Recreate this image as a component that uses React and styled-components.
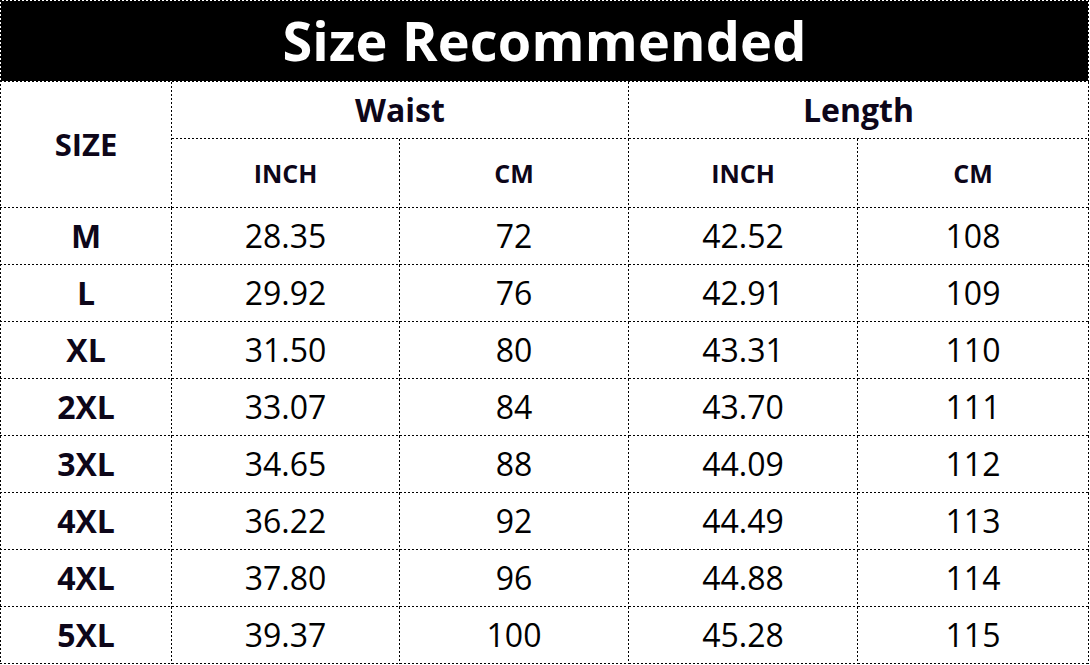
import React from "react";
import styled, { createGlobalStyle } from "styled-components";

const GlobalStyle = createGlobalStyle`
  html, body { margin: 0; padding: 0; background: #fff; }
  body { font-family: "Open Sans", "Noto Sans", sans-serif; color: #000; }
`;

const DOT = "#000";
const hLine = `repeating-linear-gradient(to right, ${DOT} 0 2px, transparent 2px 4px)`;
const vLine = `repeating-linear-gradient(to bottom, ${DOT} 0 2px, transparent 2px 4px)`;

const Table = styled.div`
  display: grid;
  width: 1089px;
  grid-template-columns: 172px 228px 229px 229px 231px;
  grid-template-rows: 82px 57px 69px repeat(8, 57px);
  background-image: ${hLine}, ${vLine};
  background-size: 100% 1px, 1px 100%;
  background-position: left top, left top;
  background-repeat: no-repeat;
`;

const Cell = styled.div`
  display: flex;
  align-items: center;
  justify-content: center;
  box-sizing: border-box;
  padding: ${(p) => (p.$first ? "0 1px 1px 1px" : "0 1px 1px 0")};
  padding-top: ${(p) => (p.$top ? "1px" : "0")};
  grid-column: ${(p) => p.$col || "auto"};
  grid-row: ${(p) => p.$row || "auto"};
  background-image: ${hLine}, ${vLine};
  background-size: 100% 1px, 1px 100%;
  background-position: left bottom, right top;
  background-repeat: no-repeat;
  font-size: ${(p) => p.$size || 32}px;
  font-weight: ${(p) => (p.$bold ? 700 : 400)};
  color: ${(p) => (p.$bold ? "#0d0619" : "#000")};
  line-height: 1;
  white-space: nowrap;
`;

const TitleBar = styled.div`
  width: 100%;
  height: 100%;
  background: #000;
  color: #fff;
  display: flex;
  align-items: center;
  justify-content: center;
  font-size: 54px;
  font-weight: 700;
  letter-spacing: 0.2px;
  padding-bottom: 2px;
  box-sizing: border-box;
`;

const rows = [
  ["M", "28.35", "72", "42.52", "108"],
  ["L", "29.92", "76", "42.91", "109"],
  ["XL", "31.50", "80", "43.31", "110"],
  ["2XL", "33.07", "84", "43.70", "111"],
  ["3XL", "34.65", "88", "44.09", "112"],
  ["4XL", "36.22", "92", "44.49", "113"],
  ["4XL", "37.80", "96", "44.88", "114"],
  ["5XL", "39.37", "100", "45.28", "115"],
];

export default function App() {
  return (
    <>
      <GlobalStyle />
      <Table>
        <Cell $col="1 / span 5" $first $top>
          <TitleBar>Size Recommended</TitleBar>
        </Cell>
        <Cell $col="1" $row="2 / span 2" $first $bold $size={31}>SIZE</Cell>
        <Cell $col="2 / span 2" $bold $size={32}>Waist</Cell>
        <Cell $col="4 / span 2" $bold $size={32}>Length</Cell>
        <Cell $bold $size={25}>INCH</Cell>
        <Cell $bold $size={25}>CM</Cell>
        <Cell $bold $size={25}>INCH</Cell>
        <Cell $bold $size={25}>CM</Cell>
        {rows.map((r, i) =>
          r.map((v, j) => (
            <Cell key={`${i}-${j}`} $first={j === 0} $bold={j === 0}>
              {v}
            </Cell>
          ))
        )}
      </Table>
    </>
  );
}
